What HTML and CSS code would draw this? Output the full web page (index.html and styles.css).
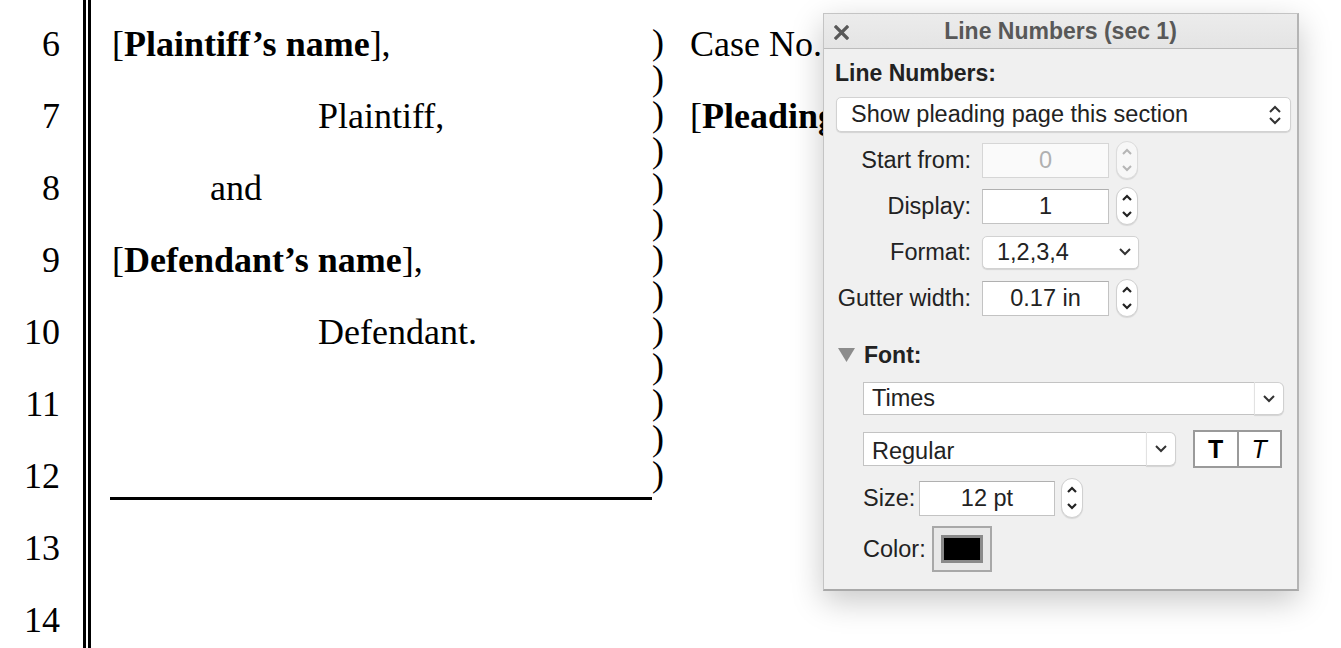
FILE: index.html
```html
<!DOCTYPE html>
<html lang="en">
<head>
    <meta charset="UTF-8">
    <meta name="viewport" content="width=device-width, initial-scale=1.0">
    <title>Pleading - Line Numbers</title>
    <link rel="stylesheet" href="styles.css">
</head>
<body>
    <!-- Document Page -->
    <section class="page">
        <div class="gutter">
            <div>6</div>
            <div>7</div>
            <div>8</div>
            <div>9</div>
            <div>10</div>
            <div>11</div>
            <div>12</div>
            <div>13</div>
            <div>14</div>
        </div>
        <div class="margin-rule"></div>

        <div class="parties">
            <p class="line">[<b>Plaintiff’s name</b>],</p>
            <p class="line role">Plaintiff,</p>
            <p class="line and">and</p>
            <p class="line">[<b>Defendant’s name</b>],</p>
            <p class="line role">Defendant.</p>
            <p class="line"></p>
            <div class="underline"></div>
        </div>

        <div class="parens">
            <div>)</div><div>)</div><div>)</div><div>)</div><div>)</div>
            <div>)</div><div>)</div><div>)</div><div>)</div><div>)</div>
            <div>)</div><div>)</div><div>)</div>
        </div>

        <!-- right side runs under the palette -->
        <div class="case-info">
            <p class="line">Case No.</p>
            <p class="line">[<b>Pleading Title</b>]</p>
        </div>
    </section>

    <!-- Line Numbers palette -->
    <div class="palette">
        <div class="title-bar">
            <svg class="close" width="15" height="15" viewBox="0 0 15 15">
                <path d="M2 2 L13 13 M13 2 L2 13" stroke="#585858" stroke-width="3.2" stroke-linecap="square"/>
            </svg>
            <span>Line Numbers (sec 1)</span>
        </div>

        <div class="palette-body">
            <h3>Line Numbers:</h3>

            <div class="popup wide">
                <span>Show pleading page this section</span>
                <svg width="14" height="22" viewBox="0 0 14 22">
                    <path d="M2 8 L7 3 L12 8 M2 14 L7 19 L12 14" fill="none" stroke="#333" stroke-width="2"/>
                </svg>
            </div>

            <div class="form">
                <label>Start from:</label>
                <input class="field" value="0" disabled>
                <div class="stepper disabled">
                    <svg width="22" height="38" viewBox="0 0 22 38">
                        <path d="M7 13 L11 9 L15 13 M7 25 L11 29 L15 25" fill="none" stroke="#b5b5b5" stroke-width="2"/>
                    </svg>
                </div>

                <label>Display:</label>
                <input class="field" value="1">
                <div class="stepper">
                    <svg width="22" height="38" viewBox="0 0 22 38">
                        <path d="M7 13 L11 9 L15 13 M7 25 L11 29 L15 25" fill="none" stroke="#222" stroke-width="2.2"/>
                    </svg>
                </div>

                <label>Format:</label>
                <div class="popup format">
                    <span>1,2,3,4</span>
                    <svg width="14" height="10" viewBox="0 0 14 10">
                        <path d="M2 2 L7 7 L12 2" fill="none" stroke="#333" stroke-width="2"/>
                    </svg>
                </div>

                <label>Gutter width:</label>
                <input class="field" value="0.17 in">
                <div class="stepper">
                    <svg width="22" height="38" viewBox="0 0 22 38">
                        <path d="M7 13 L11 9 L15 13 M7 25 L11 29 L15 25" fill="none" stroke="#222" stroke-width="2.2"/>
                    </svg>
                </div>
            </div>

            <div class="disclosure">
                <svg width="17" height="14" viewBox="0 0 17 14">
                    <polygon points="0,0 17,0 8.5,14" fill="#8c8c8c"/>
                </svg>
                <h3>Font:</h3>
            </div>

            <div class="font-section">
                <div class="combo family">
                    <input class="combo-field" value="Times">
                    <div class="combo-btn">
                        <svg width="14" height="10" viewBox="0 0 14 10">
                            <path d="M2 2 L7 7 L12 2" fill="none" stroke="#333" stroke-width="2"/>
                        </svg>
                    </div>
                </div>

                <div class="style-row">
                    <div class="combo face">
                        <input class="combo-field" value="Regular">
                        <div class="combo-btn">
                            <svg width="14" height="10" viewBox="0 0 14 10">
                                <path d="M2 2 L7 7 L12 2" fill="none" stroke="#333" stroke-width="2"/>
                            </svg>
                        </div>
                    </div>
                    <div class="segments">
                        <button class="seg bold">T</button>
                        <button class="seg italic">T</button>
                    </div>
                </div>

                <div class="size-row">
                    <label>Size:</label>
                    <input class="field size" value="12 pt">
                    <div class="stepper">
                        <svg width="22" height="40" viewBox="0 0 22 40">
                            <path d="M7 14 L11 10 L15 14 M7 26 L11 30 L15 26" fill="none" stroke="#222" stroke-width="2.2"/>
                        </svg>
                    </div>
                </div>

                <div class="color-row">
                    <label>Color:</label>
                    <div class="color-well">
                        <div class="swatch"></div>
                    </div>
                </div>
            </div>
        </div>
    </div>
</body>
</html>
```

FILE: styles.css
```css
/* Reset some default styles */
* {
    margin: 0;
    padding: 0;
    box-sizing: border-box;
}

body {
    font-family: "Liberation Serif", "Times New Roman", serif;
    background-color: #fff;
    color: #000;
    width: 1341px;
    height: 648px;
    overflow: hidden;
}

/* Document Page Styles */
.page {
    display: flex;
    height: 648px;
    font-size: 36px;
}

.gutter {
    width: 60px;
    padding-top: 8px;
    text-align: right;
    line-height: 72px;
}

.margin-rule {
    width: 8px;
    height: 648px;
    margin-left: 23px;
    border-left: 3px solid #000;
    border-right: 3px solid #000;
}

.parties {
    width: 542px;
    margin-left: 19px;
    padding-top: 8px;
}

.line {
    height: 72px;
    line-height: 72px;
    padding-left: 2px;
    white-space: nowrap;
}

.line.and {
    padding-left: 100px;
}

.line.role {
    padding-left: 208px;
}

.underline {
    height: 60px;
    border-bottom: 3px solid #000;
}

.parens {
    width: 38px;
    padding-top: 24px;
    line-height: 36px;
}

.case-info {
    width: 133px;
    padding-top: 8px;
    overflow: hidden;
}

.case-info .line {
    padding-left: 0;
}

/* Palette Styles */
.palette {
    position: absolute;
    left: 823px;
    top: 13px;
    width: 476px;
    height: 578px;
    background-color: #f0f0f0;
    border: 1px solid #c4c4c4;
    border-bottom: 2px solid #a9a9a9;
    border-right: 2px solid #b4b4b4;
    box-shadow: 0 10px 30px rgba(0, 0, 0, 0.22);
    font-family: "Liberation Sans", Arial, sans-serif;
    font-size: 23.5px;
    color: #222;
}

.title-bar {
    height: 35px;
    display: flex;
    align-items: center;
    justify-content: center;
    background: linear-gradient(#ececec, #e4e4e4);
    border-bottom: 1px solid #bcbcbc;
    color: #585858;
    font-weight: bold;
    font-size: 23px;
}

.title-bar .close {
    position: absolute;
    left: 10px;
    top: 11px;
}

.palette-body {
    padding: 10px 8px 0 11px;
}

.palette-body h3 {
    font-size: 23px;
    line-height: 28px;
    font-weight: bold;
    color: #222;
    white-space: nowrap;
}

.popup {
    display: flex;
    align-items: center;
    justify-content: space-between;
    background-color: #fff;
    border: 1px solid #d2d2d2;
    border-radius: 5px;
    box-shadow: 0 1px 1px rgba(0, 0, 0, 0.12);
    white-space: nowrap;
}

.popup.wide {
    width: 455px;
    height: 35px;
    margin: 10px 0 0 1px;
    padding: 0 8px 0 14px;
}

.popup.format {
    grid-column: span 2;
    width: 157px;
    height: 33px;
    padding: 0 6px 0 14px;
}

/* Line number form */
.form {
    display: grid;
    grid-template-columns: 147px 127px 29px;
    grid-auto-rows: 38px;
    row-gap: 8px;
    margin-top: 9px;
    align-items: center;
}

.form label {
    text-align: right;
    padding-right: 11px;
    white-space: nowrap;
}

.field {
    width: 127px;
    height: 35px;
    border: 1px solid #c3c3c3;
    border-top-color: #b0b0b0;
    background-color: #fff;
    font: inherit;
    color: #222;
    text-align: center;
    outline: none;
}

.field:disabled {
    color: #b0b0b0;
    border-color: #d6d6d6;
    background-color: #fafafa;
}

.form .stepper {
    margin-left: 7px;
}

.stepper {
    width: 22px;
    height: 38px;
    background-color: #fff;
    border: 1px solid #d0d0d0;
    border-radius: 11px;
    box-shadow: 0 1px 1px rgba(0, 0, 0, 0.1);
    display: flex;
    align-items: center;
    justify-content: center;
}

.stepper svg {
    flex-shrink: 0;
}

.stepper.disabled {
    background-color: #f7f7f7;
    border-color: #dcdcdc;
}

/* Font section */
.disclosure {
    display: flex;
    align-items: center;
    gap: 9px;
    margin: 24px 0 0 3px;
}

.font-section {
    padding-left: 28px;
}

.combo {
    display: flex;
    height: 34px;
}

.combo.family {
    width: 421px;
    height: 33px;
    margin-top: 13px;
}

.combo.face {
    width: 313px;
}

.combo-field {
    flex: 1;
    min-width: 0;
    height: 100%;
    border: 1px solid #c3c3c3;
    border-right: none;
    background-color: #fff;
    font: inherit;
    color: #222;
    padding-left: 8px;
    outline: none;
}

.combo-btn {
    width: 30px;
    height: 100%;
    background-color: #fff;
    border: 1px solid #d0d0d0;
    border-left: 1px solid #e2e2e2;
    border-radius: 0 6px 6px 0;
    box-shadow: 0 1px 1px rgba(0, 0, 0, 0.12);
    display: flex;
    align-items: center;
    justify-content: center;
}

.style-row {
    display: flex;
    align-items: center;
    height: 38px;
    margin-top: 15px;
}

.style-row .combo-field {
    padding-top: 4px;
}

.segments {
    display: flex;
    width: 89px;
    height: 38px;
    margin-left: 17px;
    border: 2px solid #9a9a9a;
    background-color: #fff;
}

.seg {
    flex: 1;
    border: none;
    background: none;
    font-family: "Liberation Sans", Arial, sans-serif;
    font-size: 25px;
    color: #000;
}

.seg.bold {
    font-weight: bold;
    border-right: 2px solid #9a9a9a;
}

.seg.italic {
    font-style: italic;
}

.size-row {
    display: flex;
    align-items: center;
    height: 40px;
    margin-top: 10px;
}

.size-row label {
    width: 56px;
}

.field.size {
    width: 136px;
    height: 35px;
}

.size-row .stepper {
    height: 40px;
    margin-left: 6px;
}

.color-row {
    display: flex;
    align-items: center;
    margin-top: 8px;
}

.color-row label {
    width: 69px;
}

.color-well {
    width: 60px;
    height: 46px;
    background-color: #e8e8e8;
    border: 2px solid #a8a8a8;
    display: flex;
    align-items: center;
    justify-content: center;
}

.swatch {
    width: 42px;
    height: 28px;
    background-color: #000;
    border: 3px solid #8a8a8a;
}
```
